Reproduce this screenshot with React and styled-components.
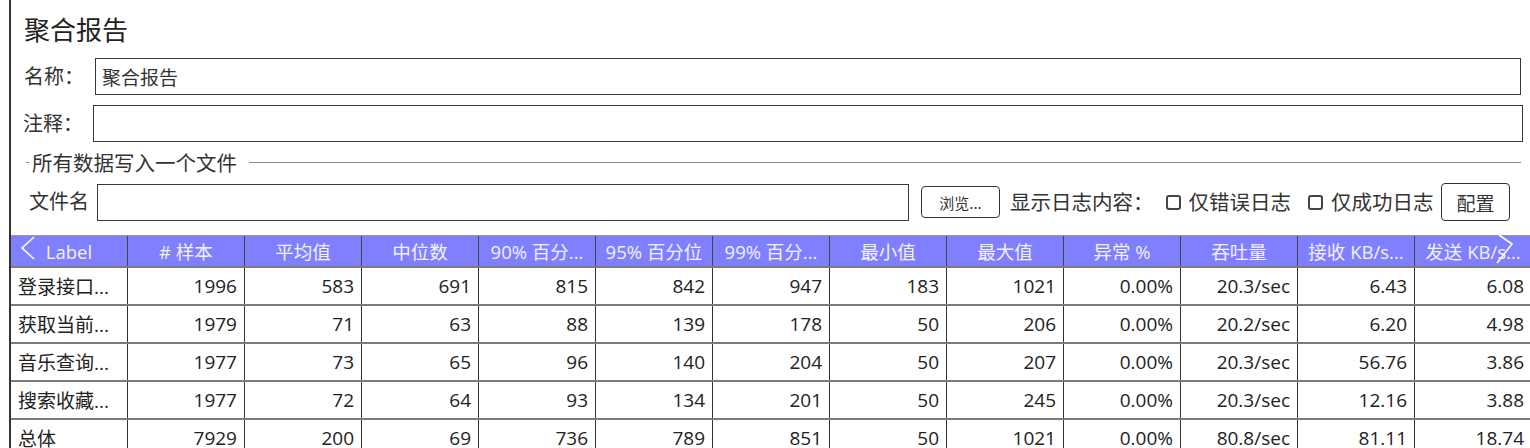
import React from 'react'
import styled, { createGlobalStyle } from 'styled-components'

const GlobalStyle = createGlobalStyle`
  html, body {
    margin: 0;
    padding: 0;
    background: #fff;
    height: 448px;
    overflow: hidden;
  }
  body {
    font-family: "Open Sans", "Noto Sans CJK SC", sans-serif;
    color: #222;
  }
`

const columns = [
  { title: 'Label', align: 'left' },
  { title: '# 样本' },
  { title: '平均值' },
  { title: '中位数' },
  { title: '90% 百分...' },
  { title: '95% 百分位' },
  { title: '99% 百分...' },
  { title: '最小值' },
  { title: '最大值' },
  { title: '异常 %' },
  { title: '吞吐量' },
  { title: '接收 KB/s...' },
  { title: '发送 KB/s...' },
]

const rows = [
  ['登录接口...', '1996', '583', '691', '815', '842', '947', '183', '1021', '0.00%', '20.3/sec', '6.43', '6.08'],
  ['获取当前...', '1979', '71', '63', '88', '139', '178', '50', '206', '0.00%', '20.2/sec', '6.20', '4.98'],
  ['音乐查询...', '1977', '73', '65', '96', '140', '204', '50', '207', '0.00%', '20.3/sec', '56.76', '3.86'],
  ['搜索收藏...', '1977', '72', '64', '93', '134', '201', '50', '245', '0.00%', '20.3/sec', '12.16', '3.88'],
  ['总体', '7929', '200', '69', '736', '789', '851', '50', '1021', '0.00%', '80.8/sec', '81.11', '18.74'],
]

export default function App() {
  return (
    <>
      <GlobalStyle />
      <Panel>
        <Form>
          <Title>聚合报告</Title>
          <FieldRow>
            <FieldLabel $width={71}>名称：</FieldLabel>
            <TextInput defaultValue="聚合报告" />
          </FieldRow>
          <FieldRow $gap={10}>
            <FieldLabel $width={70} $shift={-1}>注释：</FieldLabel>
            <TextInput $right={-2} />
          </FieldRow>
          <Section>
            <SectionTick />
            <SectionTitle>所有数据写入一个文件</SectionTitle>
            <SectionLine />
          </Section>
          <FileRow>
            <FieldLabel $width={68} $shift={5}>文件名</FieldLabel>
            <TextInput $fixed={812} />
            <Button $small>浏览...</Button>
            <Caption>显示日志内容：</Caption>
            <Check>
              <CheckBox type="checkbox" />
              仅错误日志
            </Check>
            <Check $gap={17}>
              <CheckBox type="checkbox" />
              仅成功日志
            </Check>
            <Button>配置</Button>
          </FileRow>
        </Form>

        <TableWrap>
          <HeadRow>
            {columns.map((c, i) => (
              <HeadCell key={i}>{c.title}</HeadCell>
            ))}
          </HeadRow>
          {rows.map((r, ri) => (
            <BodyRow key={ri}>
              {r.map((v, ci) => (
                <Cell key={ci} $align={columns[ci].align}>{v}</Cell>
              ))}
            </BodyRow>
          ))}
          <Chevron $side="left" width="16" height="26" viewBox="0 0 16 26">
            <polyline points="14,1 2,12 14,23" fill="none" stroke="#fff" strokeWidth="1.6" />
          </Chevron>
          <Chevron $side="right" width="18" height="30" viewBox="0 0 18 30">
            <polyline points="3,1 16,10 1,29" fill="none" stroke="#fff" strokeWidth="1.6" />
          </Chevron>
        </TableWrap>
      </Panel>
    </>
  )
}

const Panel = styled.div`
  margin-left: 9px;
  height: 448px;
  border-left: 2px solid #333;
  overflow: hidden;
`

const Form = styled.div`
  display: flex;
  flex-direction: column;
  padding: 10px 9px 0 13px;
`

const Title = styled.h1`
  margin: 0;
  height: 40px;
  line-height: 40px;
  font-size: 26px;
  font-weight: 400;
  color: #222;
`

const FieldRow = styled.div`
  display: flex;
  align-items: center;
  height: 37px;
  margin-top: ${p => p.$gap ?? 8}px;
`

const FieldLabel = styled.span`
  flex: 0 0 ${p => p.$width}px;
  margin-left: ${p => p.$shift || 0}px;
  font-size: 20px;
  line-height: 24px;
  color: #333;
`

const TextInput = styled.input`
  flex: ${p => (p.$fixed ? `0 0 ${p.$fixed}px` : '1')};
  min-width: 0;
  height: 37px;
  box-sizing: border-box;
  margin-right: ${p => p.$right || 0}px;
  padding: 0 6px;
  border: 1px solid #3a3a3a;
  border-radius: 0;
  font-family: "Noto Sans CJK SC", sans-serif;
  font-size: 19px;
  color: #333;
  outline: none;
`

const Section = styled.div`
  display: flex;
  align-items: center;
  height: 41px;
`

const SectionTick = styled.span`
  width: 3px;
  height: 1px;
  background: #888;
  margin-left: 2px;
  margin-right: 3px;
`

const SectionTitle = styled.span`
  font-size: 20.5px;
  line-height: 24px;
  color: #333;
`

const SectionLine = styled.span`
  flex: 1;
  height: 1px;
  background: #8a8a8a;
  margin-left: 12px;
`

const FileRow = styled.div`
  display: flex;
  align-items: center;
  height: 38px;
  margin-right: 11px;
`

const Button = styled.button`
  flex: none;
  box-sizing: border-box;
  width: ${p => (p.$small ? 79 : 69)}px;
  height: ${p => (p.$small ? 32 : 38)}px;
  padding: 0;
  margin-left: ${p => (p.$small ? '12px' : 'auto')};
  border: 1px solid #333;
  border-radius: 4px;
  background: #fff;
  font-family: "Noto Sans CJK SC", sans-serif;
  font-size: ${p => (p.$small ? 15 : 19)}px;
  color: #333;
`

const Caption = styled.span`
  margin-left: 10px;
  font-size: 20.5px;
  line-height: 24px;
  color: #333;
  white-space: nowrap;
`

const Check = styled.label`
  display: flex;
  align-items: center;
  gap: 8px;
  margin-left: ${p => p.$gap ?? 12}px;
  font-size: 20.5px;
  line-height: 24px;
  color: #333;
  white-space: nowrap;
`

const CheckBox = styled.input`
  appearance: none;
  margin: 0;
  width: 15px;
  height: 15px;
  box-sizing: border-box;
  border: 2px solid #444;
  border-radius: 3px;
  background: #fff;
`

const TableWrap = styled.div`
  position: relative;
  margin-top: 14px;
  width: 1530px;
`

const gridCols = `117px repeat(12, 117px)`

const HeadRow = styled.div`
  display: grid;
  grid-template-columns: ${gridCols};
  height: 30px;
  background: #8080ff;
  border-top: 1px solid #9a9a9a;
  border-bottom: 2px solid #7a7a7a;
`

const HeadCell = styled.div`
  display: flex;
  align-items: center;
  justify-content: center;
  padding: 0 4px;
  border-right: 1px solid #444;
  font-size: 18.5px;
  color: #f2f2ff;
  white-space: nowrap;
  overflow: hidden;
`

const BodyRow = styled.div`
  display: grid;
  grid-template-columns: ${gridCols};
  height: 36px;
  border-bottom: 2px solid #7c7c7c;
`

const Cell = styled.div`
  display: flex;
  align-items: center;
  justify-content: ${p => (p.$align === 'left' ? 'flex-start' : 'flex-end')};
  padding: 0 7px;
  border-right: 1px solid #333;
  font-size: 19px;
  color: #222;
  white-space: nowrap;
  overflow: hidden;
`

const Chevron = styled.svg`
  position: absolute;
  top: ${p => (p.$side === 'left' ? 1 : -1)}px;
  ${p => (p.$side === 'left' ? 'left: 9px;' : 'left: 1485px;')}
`
